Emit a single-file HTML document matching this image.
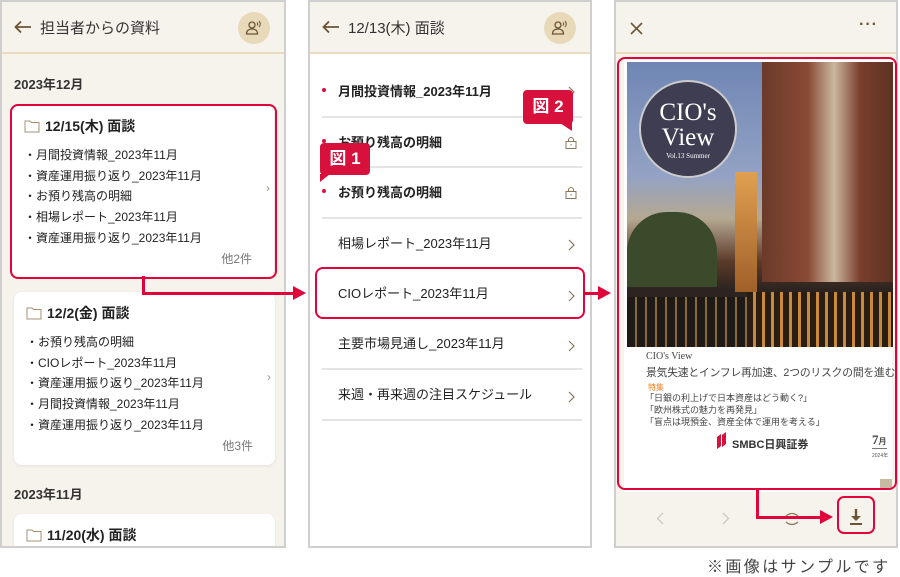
<!DOCTYPE html>
<html><head><meta charset="utf-8">
<style>
*{margin:0;padding:0;box-sizing:border-box}
body{width:900px;height:574px;background:#fff;position:relative;overflow:hidden;font-family:"Liberation Sans","Noto Sans CJK JP",sans-serif;color:#222}
.a{position:absolute}
.panel{position:absolute;top:0;height:548px;border:2px solid #cfcfcf;overflow:hidden}
.hdr{position:absolute;left:0;top:0;right:0;height:52px;background:#f6f3ec;border-bottom:2px solid #ecdcbf}
.hdr .t{position:absolute;left:38px;top:15px;font-size:15px;color:#333}
.back{position:absolute;left:12px;top:18px}
.av{position:absolute;right:14px;top:10px;width:32px;height:32px;border-radius:50%;background:#e8d9b9}
.card{position:absolute;background:#fff;border-radius:8px;box-shadow:0 1px 3px rgba(0,0,0,.08)}
.card .h{position:absolute;left:12px;top:11px;font-size:14px;font-weight:bold;color:#222}
.card .h svg{vertical-align:-2px;margin-right:5px}
.card ul{position:absolute;left:12px;top:40px;list-style:none;font-size:12px;line-height:20.7px;color:#222}
.card .o{position:absolute;right:22px;font-size:12px;color:#777}
.card .chev{position:absolute;right:4px;font-size:12px;color:#998}
.month{position:absolute;left:12px;font-size:13px;font-weight:bold;color:#333}
.row{position:absolute;left:12px;width:260px;font-size:13px;color:#222}
.sep{position:absolute;left:12px;width:260px;height:1.5px;background:#e4e4e4}
.b{font-weight:bold}
.dot{position:absolute;left:0;width:4px;height:4px;border-radius:50%;background:#d8103c}
.red{border:2.5px solid #e0043a;border-radius:8px}
.badge{position:absolute;background:#d8103c;color:#fff;font-weight:bold;font-size:17px;border-radius:4px;text-align:center}
</style></head><body>

<!-- PANEL 1 -->
<div class="panel" style="left:0;width:286px;background:#f6f3ec">
  <div class="hdr">
    <svg class="back" width="18" height="14" viewBox="0 0 18 14"><path d="M17 7H2M7 1.5L1.5 7L7 12.5" stroke="#6b5434" stroke-width="1.8" fill="none"/></svg>
    <div class="t">担当者からの資料</div>
    <div class="av"><svg width="32" height="32" viewBox="0 0 32 32"><circle cx="14" cy="13" r="3" stroke="#6b5434" stroke-width="1.3" fill="none"/><path d="M8.5 22c0-3.5 2.5-5 5.5-5s5.5 1.5 5.5 5z" stroke="#6b5434" stroke-width="1.3" fill="none"/><path d="M19 10.5q1.3 1.5 0 3M21 9q2.5 3 0 6" stroke="#6b5434" stroke-width="1" fill="none"/></svg></div>
  </div>
  <div class="month" style="top:72px">2023年12月</div>
  <div class="card" style="left:10px;top:103px;width:262px;height:172px">
    <div class="h"><svg width="16" height="13" viewBox="0 0 16 13"><path d="M1 1h5l1.5 1.5H15V12H1z" stroke="#a89070" stroke-width="1" fill="none"/></svg>12/15(木) 面談</div>
    <ul><li>・月間投資情報_2023年11月</li><li>・資産運用振り返り_2023年11月</li><li>・お預り残高の明細</li><li>・相場レポート_2023年11月</li><li>・資産運用振り返り_2023年11月</li></ul>
    <div class="o" style="top:145px">他2件</div>
    <div class="chev" style="top:76px">›</div>
  </div>
  <div class="a red" style="left:8px;top:102px;width:267px;height:175px"></div>
  <div class="card" style="left:12px;top:290px;width:261px;height:173px">
    <div class="h"><svg width="16" height="13" viewBox="0 0 16 13"><path d="M1 1h5l1.5 1.5H15V12H1z" stroke="#a89070" stroke-width="1" fill="none"/></svg>12/2(金) 面談</div>
    <ul><li>・お預り残高の明細</li><li>・CIOレポート_2023年11月</li><li>・資産運用振り返り_2023年11月</li><li>・月間投資情報_2023年11月</li><li>・資産運用振り返り_2023年11月</li></ul>
    <div class="o" style="top:145px">他3件</div>
    <div class="chev" style="top:78px">›</div>
  </div>
  <div class="month" style="top:482px">2023年11月</div>
  <div class="card" style="left:12px;top:512px;width:261px;height:60px">
    <div class="h"><svg width="16" height="13" viewBox="0 0 16 13"><path d="M1 1h5l1.5 1.5H15V12H1z" stroke="#a89070" stroke-width="1" fill="none"/></svg>11/20(水) 面談</div>
  </div>
</div>

<!-- PANEL 2 -->
<div class="panel" style="left:308px;width:284px;background:#fff">
  <div class="hdr">
    <svg class="back" width="18" height="14" viewBox="0 0 18 14"><path d="M17 7H2M7 1.5L1.5 7L7 12.5" stroke="#6b5434" stroke-width="1.8" fill="none"/></svg>
    <div class="t">12/13(木) 面談</div>
    <div class="av"><svg width="32" height="32" viewBox="0 0 32 32"><circle cx="14" cy="13" r="3" stroke="#6b5434" stroke-width="1.3" fill="none"/><path d="M8.5 22c0-3.5 2.5-5 5.5-5s5.5 1.5 5.5 5z" stroke="#6b5434" stroke-width="1.3" fill="none"/><path d="M19 10.5q1.3 1.5 0 3M21 9q2.5 3 0 6" stroke="#6b5434" stroke-width="1" fill="none"/></svg></div>
  </div>
  <div class="row b" style="top:79px"><span class="dot" style="top:7px"></span><span style="margin-left:16px">月間投資情報_2023年11月</span></div>
  <div class="sep" style="top:114px"></div>
  <div class="row b" style="top:130px"><span class="dot" style="top:7px"></span><span style="margin-left:16px">お預り残高の明細</span></div>
  <div class="sep" style="top:164px"></div>
  <div class="row b" style="top:180px"><span class="dot" style="top:7px"></span><span style="margin-left:16px">お預り残高の明細</span></div>
  <div class="sep" style="top:215px"></div>
  <div class="row" style="top:231px"><span style="margin-left:16px">相場レポート_2023年11月</span></div>
  <div class="row" style="top:281px"><span style="margin-left:16px">CIOレポート_2023年11月</span></div>
  <div class="row" style="top:331px"><span style="margin-left:16px">主要市場見通し_2023年11月</span></div>
  <div class="sep" style="top:366px"></div>
  <div class="row" style="top:382px"><span style="margin-left:16px">来週・再来週の注目スケジュール</span></div>
  <div class="sep" style="top:417px"></div>
  <svg class="a" style="left:258px;top:84px" width="8" height="12" viewBox="0 0 8 12"><path d="M1 1l5 5-5 5" stroke="#8a7658" stroke-width="1.2" fill="none"/></svg>
  <svg class="a" style="left:255px;top:135px" width="12" height="12" viewBox="0 0 12 12"><rect x="1" y="4.5" width="10" height="7" stroke="#8a7658" fill="none"/><path d="M3.5 4.5V3a2.5 2.5 0 015 0v1.5" stroke="#8a7658" fill="none"/><rect x="5.5" y="7" width="1" height="1.5" fill="#8a7658"/></svg>
  <svg class="a" style="left:255px;top:185px" width="12" height="12" viewBox="0 0 12 12"><rect x="1" y="4.5" width="10" height="7" stroke="#8a7658" fill="none"/><path d="M3.5 4.5V3a2.5 2.5 0 015 0v1.5" stroke="#8a7658" fill="none"/><rect x="5.5" y="7" width="1" height="1.5" fill="#8a7658"/></svg>
  <svg class="a" style="left:258px;top:237px" width="8" height="12" viewBox="0 0 8 12"><path d="M1 1l5 5-5 5" stroke="#8a7658" stroke-width="1.2" fill="none"/></svg>
  <svg class="a" style="left:258px;top:288px" width="8" height="12" viewBox="0 0 8 12"><path d="M1 1l5 5-5 5" stroke="#8a7658" stroke-width="1.2" fill="none"/></svg>
  <svg class="a" style="left:258px;top:338px" width="8" height="12" viewBox="0 0 8 12"><path d="M1 1l5 5-5 5" stroke="#8a7658" stroke-width="1.2" fill="none"/></svg>
  <svg class="a" style="left:258px;top:389px" width="8" height="12" viewBox="0 0 8 12"><path d="M1 1l5 5-5 5" stroke="#8a7658" stroke-width="1.2" fill="none"/></svg>
</div>
<div class="a red" style="left:315px;top:267px;width:270px;height:52px"></div>
<div class="badge" style="left:523px;top:90px;width:50px;height:34px;line-height:34px">図 2</div>
<svg class="a" style="left:560px;top:123px" width="12" height="8"><path d="M0 0h12v8z" fill="#d8103c"/></svg>
<div class="badge" style="left:320px;top:143px;width:50px;height:32px;line-height:32px">図 1</div>
<svg class="a" style="left:320px;top:174px" width="10" height="8"><path d="M0 0h10L0 8z" fill="#d8103c"/></svg>

<!-- PANEL 3 -->
<div class="panel" style="left:614px;width:284px;background:#f6f3ec">
  <div class="hdr">
    <svg class="a" style="left:14px;top:20px" width="13" height="13" viewBox="0 0 13 13"><path d="M1 1l11 11M12 1L1 12" stroke="#6b5434" stroke-width="1.6"/></svg>
    <div class="a" style="right:18px;top:14px;font-size:16px;color:#6b5434;letter-spacing:1px;font-weight:bold">···</div>
  </div>
  <div class="a" style="left:8px;top:58px;width:268px;height:432px;background:#fff"></div>
  <!-- photo -->
  <div class="a" style="left:11px;top:60px;width:266px;height:285px;overflow:hidden;background:linear-gradient(180deg,#6f86b4 0%,#93a2c4 40%,#b5a891 55%,#5c3a28 70%,#2b2420 80%,#3a2a18 100%)">
    <div class="a" style="left:135px;top:0;width:131px;height:220px;background:linear-gradient(90deg,#6b3a2a,#8a4a34 35%,#c9b7a0 55%,#7a3e2c 75%,#5e3224)"></div>
    <div class="a" style="left:0;top:150px;width:90px;height:75px;background:#3b4a2a;border-radius:40px 40px 0 0"></div>
    <div class="a" style="left:108px;top:110px;width:22px;height:120px;background:linear-gradient(#e0a050,#a0602a)"></div>
    <div class="a" style="left:120px;top:230px;width:146px;height:55px;background:repeating-linear-gradient(90deg,#2a1e14 0 6px,#c98a3a 6px 9px)"></div>
    <div class="a" style="left:0;top:235px;width:120px;height:50px;background:repeating-linear-gradient(90deg,#1e1a18 0 8px,#8a6a3a 8px 10px)"></div>
    <div class="a" style="left:12px;top:18px;width:98px;height:98px;border-radius:50%;background:#3f3d52;border:2px solid #ccc;color:#fff;text-align:center;font-family:'Liberation Serif',serif;font-size:25px;line-height:25px;padding-top:18px">CIO's<br>View<div style="font-size:7px;line-height:12px">Vol.13 Summer</div></div>
  </div>
  <div class="a" style="left:30px;top:349px;font-family:'Liberation Serif',serif;font-size:10px;color:#444">CIO's View</div>
  <div class="a" style="left:30px;top:362px;font-size:10.8px;color:#444;white-space:nowrap;letter-spacing:-0.2px">景気失速とインフレ再加速、2つのリスクの間を進む</div>
  <div class="a" style="left:32px;top:380px;font-size:8px;color:#f08020">特集</div>
  <div class="a" style="left:29px;top:390px;font-size:9px;line-height:12px;color:#444">「日銀の利上げで日本資産はどう動く?」<br>「欧州株式の魅力を再発見」<br>「盲点は現預金、資産全体で運用を考える」</div>
  <svg class="a" style="left:98px;top:430px" width="14" height="18"><path d="M3 5l4-3v12l-4 3zM8 3l4-3v12l-4 3z" fill="#d8103c"/></svg>
  <div class="a" style="left:116px;top:434px;font-size:11px;color:#333;font-weight:bold">SMBC日興証券</div>
  <div class="a" style="left:256px;top:430px;font-size:13px;color:#444;font-family:'Liberation Serif',serif;border-bottom:1px solid #777;font-weight:bold">7<span style="font-size:8px">月</span></div>
  <div class="a" style="left:256px;top:450px;font-size:5px;color:#555">2024年</div>
  <div class="a" style="left:264px;top:477px;width:12px;height:9px;background:#c7b9a2"></div>
  <svg class="a" style="left:40px;top:510px" width="8" height="13"><path d="M7 1L1.5 6.5 7 12" stroke="#c8c8c8" stroke-width="1.3" fill="none"/></svg>
  <svg class="a" style="left:106px;top:510px" width="8" height="13"><path d="M1 1l5.5 5.5L1 12" stroke="#c8c8c8" stroke-width="1.3" fill="none"/></svg>
  <svg class="a" style="left:168px;top:508px" width="16" height="18"><path d="M2 6q6-5 12 0M2 12q6 5 12 0" stroke="#8a7658" stroke-width="1.3" fill="none"/></svg>
  <svg class="a" style="left:232px;top:506px" width="16" height="18"><path d="M8 1v10" stroke="#6b5434" stroke-width="2.4"/><path d="M3 8l5 5 5-5z" fill="#6b5434"/><path d="M2 16h12" stroke="#6b5434" stroke-width="2"/></svg>
</div>
<div class="a red" style="left:617px;top:57px;width:280px;height:433px"></div>
<div class="a red" style="left:837px;top:496px;width:38px;height:38px;border-radius:7px"></div>

<!-- arrows -->
<div class="a" style="left:142px;top:276px;width:2.5px;height:18px;background:#e0043a"></div>
<div class="a" style="left:142px;top:292px;width:153px;height:2.5px;background:#e0043a"></div>
<svg class="a" style="left:293px;top:286px" width="13" height="14"><path d="M0 0l13 7L0 14z" fill="#e0043a"/></svg>
<div class="a" style="left:585px;top:292px;width:14px;height:2.5px;background:#e0043a"></div>
<svg class="a" style="left:598px;top:286px" width="13" height="14"><path d="M0 0l13 7L0 14z" fill="#e0043a"/></svg>
<div class="a" style="left:756px;top:489px;width:2.5px;height:29px;background:#e0043a"></div>
<div class="a" style="left:756px;top:516px;width:66px;height:2.5px;background:#e0043a"></div>
<svg class="a" style="left:820px;top:510px" width="13" height="14"><path d="M0 0l13 7L0 14z" fill="#e0043a"/></svg>

<div class="a" style="left:707px;top:553px;font-size:16px;color:#444;letter-spacing:2.4px;white-space:nowrap">※画像はサンプルです</div>
</body></html>
